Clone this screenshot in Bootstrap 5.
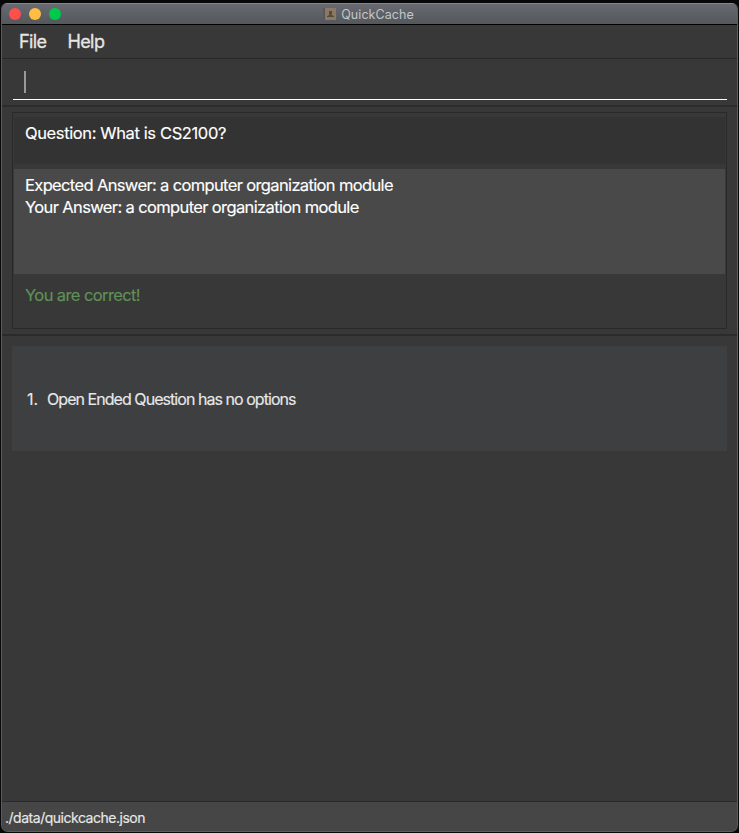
<!DOCTYPE html>
<html lang="en">
<head>
<meta charset="utf-8">
<meta name="viewport" content="width=device-width, initial-scale=1">
<title>QuickCache</title>
<link href="https://cdn.jsdelivr.net/npm/bootstrap@5.3.0/dist/css/bootstrap.min.css" rel="stylesheet">
<style>
body{background:#080808;font-family:Inter,"Liberation Sans",sans-serif;color:#fff;height:833px;overflow:hidden}
.app-window{width:737px;height:829px;margin:3px 0 0 1px;background:#383838;border:1px solid #5c5c5c;border-top:0;border-radius:6px 6px 7px 7px}
.title-bar{flex:0 0 22px;background:linear-gradient(#676a70,#54575c);border-top:1px solid #85888c;border-bottom:1px solid #000;padding-right:2px}
.lights{gap:8px;left:7px;top:4px}
.light{width:12px;height:12px}
.light-close{background:#ff4f4b}.light-min{background:#ffbd42}.light-max{background:#00ca4b}
.title-text{font-size:12.5px;line-height:18px;padding-top:2px;letter-spacing:.05px;color:#c4c6c9}
.menu-row{flex:0 0 34px;border-bottom:1px solid #292929;gap:21px;padding-left:17px;font-size:18px;line-height:33px;color:#e6e6e6}
.menu-row span{letter-spacing:-.6px;-webkit-text-stroke:.3px}
.command-row{flex:0 0 48px;border-bottom:2px solid #2b2b2b;padding:0 10px 5px 11px}
.command-box{height:41px;border-bottom:1px solid #fff;padding:12px 0 0 11px}
.caret{width:2px;height:22px;background:#999}
.result-row{flex:0 0 229px;border-bottom:2px solid #2b2b2b;padding:5px 10px 5px 10px}
.result-box{height:217px;border:1px solid #292929;font-size:16.5px;line-height:22px;padding:4px 1px 0;-webkit-text-stroke:.15px}
.result-box>div{padding-left:11px}
.question{height:47px;background:#333;padding-top:5px}
.answers{height:105px;margin-top:5px;background:#494949;padding-top:5px}
.verdict{padding-top:10px;color:#5f9257}
.options-row{padding:10px 10px 0}
.option{height:105px;background:#3d3f41;font-size:16px;color:#e8e8e8;padding-left:15px;-webkit-text-stroke:.15px}
.option-number{width:20px}
.status-row{flex:0 0 30px;min-height:0;border-top:1px solid #292929;background:#464646;border-radius:0 0 6px 6px;padding-left:3px;font-size:14px;line-height:32px;color:#e8e8e8;-webkit-text-stroke:.15px}
.t-q{letter-spacing:-.38px}.t-e{letter-spacing:-.64px}.t-y{letter-spacing:-.63px}.t-v{letter-spacing:-.6px}.t-o{letter-spacing:-.95px}.t-s{letter-spacing:-.48px}
</style>
</head>
<body>
<main class="app-window d-flex flex-column overflow-hidden">
<header class="title-bar position-relative d-flex justify-content-center align-items-center">
<div class="lights position-absolute d-flex"><span class="light light-close rounded-circle"></span><span class="light light-min rounded-circle"></span><span class="light light-max rounded-circle"></span></div>
<svg class="me-1" width="14" height="12" viewBox="0 0 14 12" aria-hidden="true"><path fill="#5c5754" d="M0 0h3v12H0z"/><path fill="#8c7863" d="M2 0h11v12H2z"/><path fill="#4e4b49" d="M6 3h3v3l-.5 1 2.5 1v1H4V8l2.5-1L6 6z"/></svg>
<span class="title-text">QuickCache</span>
</header>
<nav class="menu-row d-flex"><span>File</span><span>Help</span></nav>
<section class="command-row"><div class="command-box"><div class="caret"></div></div></section>
<section class="result-row"><div class="result-box">
<div class="question"><span class="t-q">Question: What is CS2100?</span></div>
<div class="answers"><span class="t-e">Expected Answer: a computer organization module</span><br><span class="t-y">Your Answer: a computer organization module</span></div>
<div class="verdict"><span class="t-v">You are correct!</span></div>
</div></section>
<section class="options-row flex-grow-1"><div class="option d-flex align-items-center"><span class="option-number">1.</span><span class="t-o">Open Ended Question has no options</span></div></section>
<footer class="status-row"><span class="t-s">./data/quickcache.json</span></footer>
</main>
<script src="https://cdn.jsdelivr.net/npm/bootstrap@5.3.0/dist/js/bootstrap.bundle.min.js"></script>
</body>
</html>
